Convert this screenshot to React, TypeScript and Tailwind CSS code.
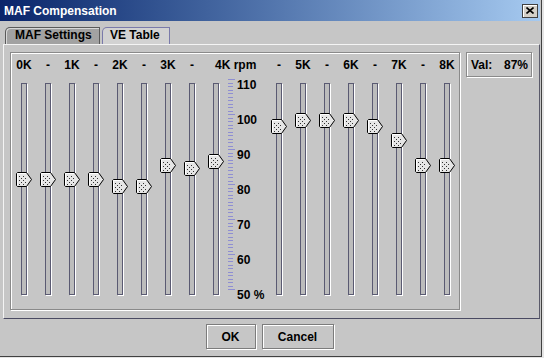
import React from "react";

// thumb top offsets (px from track top), one per slider
const thumbTops = [89, 89, 89, 89, 96, 96, 75, 78, 71, 36, 30, 30, 30, 36, 50, 75, 75];
const labels = ["0K", "-", "1K", "-", "2K", "-", "3K", "-", "4K rpm", "-", "5K", "-", "6K", "-", "7K", "-", "8K"];
const scaleNums = ["110", "100", "90", "80", "70", "60", "50 %"];

function Thumb() {
  const dots = [
    [3, 4], [5, 6], [3, 8], [5, 10], [7, 4], [7, 8], [3, 12], [9, 6], [9, 10], [7, 12],
  ];
  return (
    <svg width="16" height="15" viewBox="0 0 16 15">
      <path d="M1.5 0.5 H10.5 L15.5 7.5 L10.5 14.5 H1.5 L0.5 13.5 V1.5 Z" fill="#e6e6e6" stroke="#000" />
      <path d="M1.5 13 V1.5 H10" fill="none" stroke="#fff" />
      {dots.map(([x, y], i) => (
        <rect key={i} x={x} y={y} width="1" height="1" fill="#333" />
      ))}
    </svg>
  );
}

function SliderColumn({ label, top, wide }: { label: string; top: number; wide?: boolean }) {
  return (
    <div className="flex flex-col w-[24px]">
      <div
        className={`h-[14px] leading-[14px] w-[24px] whitespace-nowrap ${wide ? "pl-[11px] text-left" : "text-center"}`}
      >
        {label}
      </div>
      <div className="relative mt-[11px] h-[212px] w-[24px] flex justify-center">
        <div className="w-[6px] h-full border border-[#5a5a72] bg-[#bcbcbc] shadow-[1px_1px_0_#fff]" />
        <div className="absolute left-[4px]" style={{ top }}>
          <Thumb />
        </div>
      </div>
    </div>
  );
}

function Scale() {
  const ticks = Array.from({ length: 61 }, (_, i) => i);
  return (
    <div className="w-[39px] pt-[25px]">
      <div className="relative h-[212px]">
        <svg className="absolute left-0 top-0" width="8" height="212">
          {ticks.map((i) => {
            const y = Math.round(1 + i * 3.5) + 0.5;
            return (
              <line key={i} x1="0" x2={i % 10 === 0 ? 7 : 5} y1={y} y2={y} stroke="#8e8ed2" />
            );
          })}
        </svg>
        <div className="flex flex-col gap-[21px] -mt-[5px] pl-[9px]">
          {scaleNums.map((n) => (
            <div key={n} className="h-[14px] leading-[14px] whitespace-nowrap">
              {n}
            </div>
          ))}
        </div>
      </div>
    </div>
  );
}

export default function App() {
  return (
    <div className="w-[544px] h-[358px] bg-[#e4e4e4]">
      <div className="w-[542px] h-[357px] bg-[#c6c6c6] border-r border-b border-[#404040] flex flex-col font-['Liberation_Sans',Arial,sans-serif] font-bold text-[12px] text-black">
        {/* Title bar */}
        <div className="h-[21px] w-[540px] flex items-center justify-between bg-gradient-to-r from-[#0a246a] to-[#a6caf0] pl-[4px] pr-[2px]">
          <span className="text-white leading-[14px]">MAF Compensation</span>
          <div className="w-[16px] h-[14px] bg-[#d4d0c8] border border-[#404040] shadow-[inset_1px_1px_0_#fff] flex items-center justify-center">
            <svg width="8" height="7" viewBox="0 0 8 7">
              <path d="M0.5 0.5 L7.5 6.5 M7.5 0.5 L0.5 6.5" stroke="#000" strokeWidth="1.6" />
            </svg>
          </div>
        </div>

        <div className="pl-[3px] pr-[1px] pt-[6px] flex flex-col">
          {/* Tabs */}
          <div className="flex h-[17px] pl-[2px] gap-[2px]">
            <div className="w-[95px] h-[17px] rounded-tl-[5px] bg-[#a2a2a2] border border-b-0 border-[#5a5a5a] shadow-[inset_1px_1px_0_#d8d8d8] pl-[9px] leading-[15px]">
              MAF Settings
            </div>
            <div className="w-[68px] h-[17px] rounded-tl-[5px] bg-[#d2d2d2] border border-b-0 border-[#7a7aaa] pl-[7px] leading-[15px]">
              VE Table
            </div>
          </div>

          {/* Tab content */}
          <div className="h-[275px] border-t border-l border-[#f4f4f4] border-r border-b border-r-[#5a5a6a] border-b-[#4a4a62] flex items-start pl-[6px] pt-[7px]">
            <div className="w-[450px] h-[258px] border border-[#8a8a8a] shadow-[inset_1px_1px_0_#fff,1px_1px_0_#fff] pl-[1px] pt-[5px] flex items-start">
              {labels.slice(0, 9).map((l, i) => (
                <SliderColumn key={i} label={l} top={thumbTops[i]} wide={i === 8} />
              ))}
              <Scale />
              {labels.slice(9).map((l, i) => (
                <SliderColumn key={i + 9} label={l} top={thumbTops[i + 9]} />
              ))}
            </div>
            <div className="ml-[6px] w-[66px] h-[25px] border border-[#8a8a8a] shadow-[inset_1px_1px_0_#fff,1px_1px_0_#fff] flex items-center justify-between pl-[4px] pr-[3px]">
              <span>Val:</span>
              <span>87%</span>
            </div>
          </div>
        </div>

        {/* Buttons */}
        <div className="flex justify-center gap-[6px] pt-[5px] pr-[2px]">
          <button className="w-[50px] h-[25px] border border-[#7c7c7c] shadow-[inset_1px_1px_0_#fff,1px_1px_0_#fff] bg-[#c6c6c6] font-bold text-[12px]">
            OK
          </button>
          <button className="w-[72px] h-[25px] border border-[#7c7c7c] shadow-[inset_1px_1px_0_#fff,1px_1px_0_#fff] bg-[#c6c6c6] font-bold text-[12px]">
            Cancel
          </button>
        </div>
      </div>
    </div>
  );
}
